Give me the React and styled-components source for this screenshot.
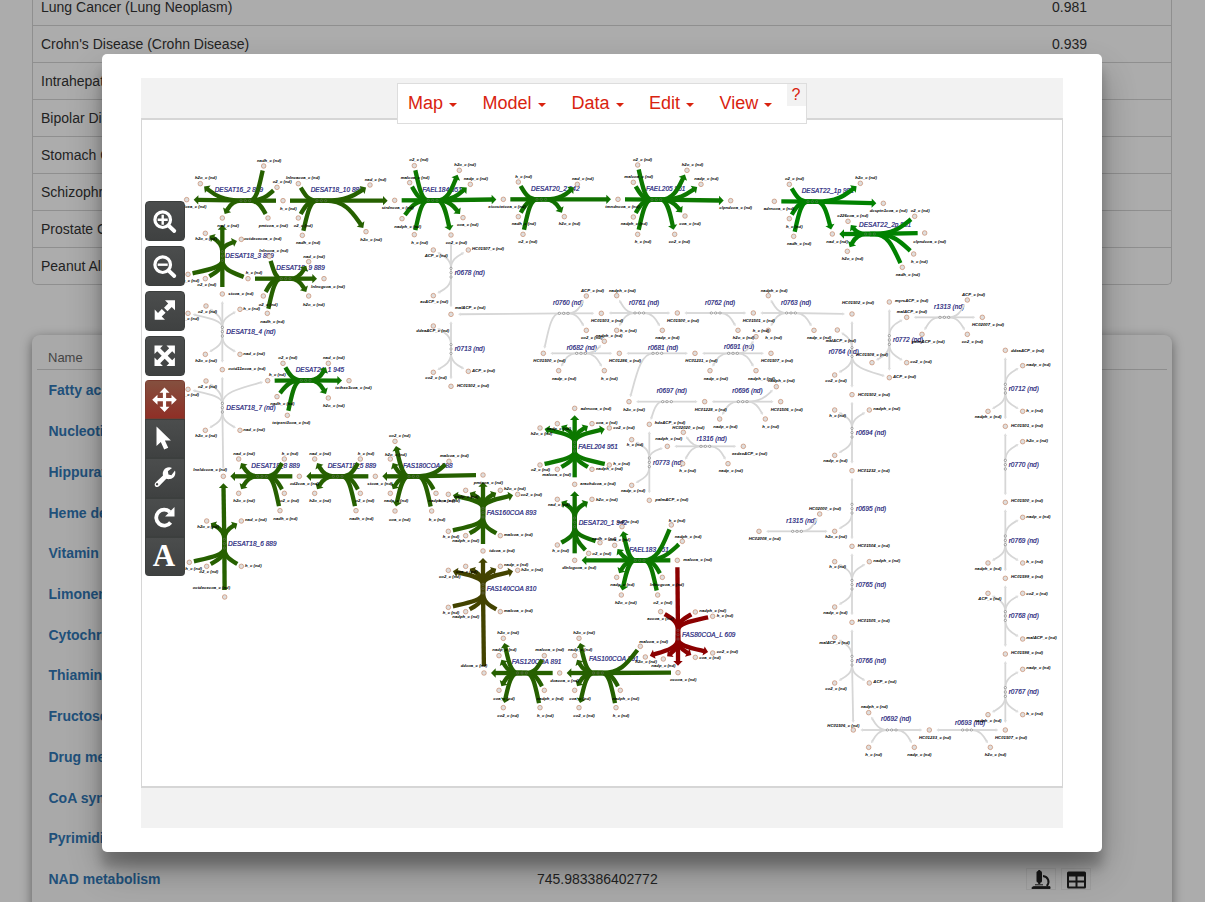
import React from 'react';
import styled, { createGlobalStyle, css } from 'styled-components';

const GlobalStyle = createGlobalStyle`
  html, body { margin: 0; padding: 0; overflow: hidden; }
  body { background: #fff; color: #333; font-family: "Liberation Sans", Arial, sans-serif; font-size: 14px; }
  * { box-sizing: border-box; }
`;

const Page = styled.main`
  height: 902px;
  overflow: hidden;
  padding: 0 33px 0 32px;
  background: #fefefe;
`;

const DiseaseTable = styled.section`
  margin-top: -11px;
  border: 1px solid #d3d3d3;
  border-top: 0;
  border-radius: 0 0 5px 5px;
`;

const DiseaseRow = styled.div`
  display: flex;
  align-items: center;
  height: 37px;
  padding-left: 8px;
  border-bottom: 1px solid #d3d3d3;
  &:last-child { border-bottom: 0; height: 36px; }
`;

const DiseaseName = styled.span`
  width: 1011px;
`;

const Card = styled.section`
  margin-top: 50px;
  height: 700px;
  padding: 0 5px;
  border-radius: 8px;
  background: #fafafa;
  box-shadow: 0 3px 12px rgba(0, 0, 0, 0.45);
`;

const CardHead = styled.div`
  height: 35px;
  padding: 14px 11px 0;
  border-bottom: 1px solid #d0d0d0;
  color: #666;
  font-size: 13px;
  line-height: 18px;
`;

const PathwayRow = styled.div`
  display: flex;
  align-items: center;
  height: 40.72px;
  padding-left: 11.5px;
`;

const PathwayLink = styled.a`
  width: 488.5px;
  color: #3077b5;
  font-weight: bold;
  white-space: nowrap;
`;

const PathwayValue = styled.span`
  width: 489px;
`;

const IconGroup = styled.div`
  display: flex;
  gap: 5px;
`;

const IconButton = styled.button`
  width: 30px;
  height: 22px;
  padding: 0;
  border: 1px solid #ebebeb;
  background: transparent;
  svg { display: block; }
`;

const Backdrop = styled.div`
  position: fixed;
  inset: 0;
  padding: 54px 0 0 102px;
  background: rgba(0, 0, 0, 0.32);
`;

const Modal = styled.div`
  width: 1000px;
  height: 798px;
  padding: 24px 39px;
  border-radius: 5px;
  background: #fff;
  box-shadow: 0 19px 38px rgba(0, 0, 0, 0.3), 0 15px 12px rgba(0, 0, 0, 0.22);
`;

const Viewer = styled.div`
  position: relative;
  display: flex;
  flex-direction: column;
  width: 922px;
  height: 750px;
  padding: 40px 0;
  background: #f2f2f2;
`;

const Canvas = styled.div`
  height: 670px;
  border: 1px solid #d6d6d6;
  border-top-width: 2px;
  border-bottom-width: 2px;
  background: #fff;
  svg { display: block; }
`;

const MenuBar = styled.nav`
  position: absolute;
  top: 5px;
  left: 256px;
  display: flex;
  width: 410px;
  height: 41px;
  padding-left: 10px;
  border: 1px solid #ddd;
  background: #fff;
  color: #d9230f;
`;

const MenuItem = styled.div`
  display: flex;
  align-items: center;
  width: ${(p) => p.$w}px;
  height: 38px;
  font-size: 18px;
  &::after {
    content: '';
    margin: 3px 0 0 6px;
    border: 4.5px solid transparent;
    border-top-color: #d9230f;
    border-bottom: 0;
  }
`;

const HelpButton = styled.div`
  position: absolute;
  top: 0;
  right: 0;
  width: 19px;
  height: 22px;
  padding-right: 1px;
  background: #f2f2f2;
  font-size: 16px;
  line-height: 21px;
  text-align: center;
`;

const Tools = styled.div`
  position: absolute;
  top: 123px;
  left: 4px;
  display: flex;
  flex-direction: column;
  gap: 5px;
`;

const ToolStack = styled.div`
  margin-top: -1px;
  overflow: hidden;
  border-radius: 4px;
`;

const Tool = styled.div`
  width: 40px;
  height: 40px;
  border-radius: 4px;
  background: linear-gradient(#4b4d4d, #3f4141);
  border: 1px solid #3c3f3e;
  svg { display: block; margin: -1px; }
  ${(p) =>
    p.$stacked &&
    css`
      height: 39.2px;
      border-radius: 0;
    `}
  ${(p) =>
    p.$active &&
    css`
      background: linear-gradient(#84503f, #8f2f26);
      border-color: #7a3a2e;
    `}
`;

/* ---- map data: three map units per pixel, each sheet with its own origin ---- */

const GREY = '#d6d6d6';
const C889 = '#266000';
const C951 = '#0c7800';
const C942 = '#107000';
const C981 = '#008200';
const C945 = '#0e7400';
const C810 = '#434300';
const C609 = '#8b0000';

const sheets = [
  [130, 140, [
    ['DESAT16_2 889', 254, 149, 346, 182, 'h', C889, 'h2o 211 131 195 113 >;hdcea 170 179 150 200 >;nad 277 234 262 257 >;nadh 401 78 381 62;o2 441 142 428 125;pmtcoa 414 234 386 257;h 459 182 450 206'],
    ['DESAT18_10 889', 542, 149, 574, 182, 'h', C889, '- 459 182;lnlncacoa 505 131 468 113;o2 505 234 491 257;nadh 517 286 498 307;nad 720 135 704 119 >;- 794 182 >;h2o 708 275 691 299 >'],
    ['DESAT18_3 889', 286, 347, 277, 348, 'v', C889, '- 277 234 >;h2o 226 280 196 295 >;octdececoa 334 298 342 294 >;h 174 403 158 420;o2 226 416 202 432;h 354 416 347 396;stcoa 277 462 295 459'],
    ['DESAT18_9 889', 439, 383, 467, 416, 'h', C889, '- 354 416;lnlncoa 418 349 388 332;o2 400 468 386 492;nadh 412 520 391 543;nad 536 365 520 348 >;lnlncgcoa 582 416 543 440 >;h2o 536 468 519 492 >'],
  ]],
  [130, 300, [
    ['DESAT18_4 (nd)', 289, 95, 277, 95, 'v', GREY, '- 277 -18;o2 228 18 204 35;h 174 40 157 56;h 330 28 340 24;h2o 226 163 196 180 >;nad 330 163 340 160 >;octd11ecoa 277 209 295 206 >'],
    ['DESAT18_7 (nd)', 289, 323, 277, 323, 'v', GREY, '- 277 209;o2 228 243 204 260;h 174 268 157 284;h 413 242 417 224;h2o 226 391 196 407 >;nad 330 391 340 388 >;lneldccoa 280 529 190 509 >'],
    ['DESAT24_1 945', 497, 209, 527, 241, 'h', C945, '- 413 242;o2 459 190 445 173;nadh 441 290 421 311;tetpent3coa 472 346 427 368;nad 595 190 579 173 >;tethex3coa 657 242 616 263 >;h2o 595 294 579 317 >'],
    ['DESAT18_8 889', 364, 496, 396, 529, 'h', C889, '- 280 529 >;nad 326 477 310 461 >;h2o 326 580 310 602 >;h 463 477 455 461;o2 463 580 450 602;nadh 450 632 430 656;od2coa 508 529 480 551'],
    ['DESAT18_5 889', 593, 496, 623, 529, 'h', C889, '- 508 529 >;nad 554 477 538 461 >;h2o 554 580 538 602 >;h 691 477 683 461;o2 691 580 676 602;nadh 678 632 658 656;stcoa 736 529 712 551'],
    ['DESAT18_6 889', 294, 731, 283, 731, 'v', C889, '- 280 529 >;h2o 230 663 202 680 >;nad 334 663 345 659 >;h 178 787 166 804;o2 230 799 208 815;h 334 799 345 797;octdececoa 284 891 188 863'],
  ]],
  [380, 380, [
    ['FAS180COA 888', 69, 257, 100, 289, 'h', C889, '- -14 289 >;co2 45 184 27 167 >;h2o 31 237 15 222 >;nadp 31 340 12 362 >;coa 45 393 27 417 >;malcoa 207 244 180 227;nadph 168 340 145 362;h 155 393 146 417;pmtcoa 309 285 281 308'],
    ['FAS160COA 893', 320, 398, 309, 398, 'v', C889, '- 309 285 >;nadp 257 331 223 349 >;coa 205 343 176 360 >;h2o 361 331 372 326 >;co2 413 343 422 342 >;h 205 454 188 469;nadph 257 467 217 482;malcoa 361 467 372 464;tdcoa 309 513 328 510'],
    ['FAEL183 951', 748, 509, 779, 541, 'h', C951, '- 584 541 >;co2 726 440 712 423 >;coa 704 496 687 479 >;nadp 710 592 691 614 >;h2o 724 645 705 668 >;h 874 435 866 420;nadph 907 484 884 468;lnlncgcoa 847 592 810 614;o2 833 645 820 668;malcoa 892 541 910 537'],
    ['DESAT20_1 942', 596, 428, 584, 427, 'v', C942, '- 584 313 >;nad 532 358 504 374 >;h2o 636 358 648 357 >;h 532 495 517 512;nadh 660 488 636 474;o2 626 520 637 519;dlnlcgcoa 584 541 547 563'],
    ['FAEL204 951', 595, 200, 584, 200, 'v', C951, 'adrncoa 584 85 602 84 >;nadp 532 131 500 145 >;h2o 480 144 452 161 >;coa 636 131 648 128 >;co2 688 144 700 141 >;o2 480 255 453 268;malcoa 532 268 487 284;nadph 636 268 648 264;h 688 255 700 251;arachdcoa 584 313 601 309'],
    ['r0773 (nd)', 819, 247, 808, 247, 'v', GREY, 'hdeACP 808 133 824 128;h 755 179 740 194;- 862 199;nadp 755 316 723 331;palmACP 808 361 826 357'],
    ['r1316 (nd)', 950, 176, 976, 199, 'h', GREY, 'nadph 862 199 826 176;HC02020 910 157 877 143;h 908 251 898 271;nadp 1044 251 1016 271;eedeeACP 1090 199 1056 220'],
  ]],
  [430, 540, [
    ['FAS140COA 810', 170, 146, 159, 146, 'v', C810, '- 159 33 >;coa 107 79 78 95 >;co2 55 91 27 108 >;nadp 211 79 222 74 >;h2o 263 91 274 89 >;h 55 202 38 218;nadph 107 215 67 230;malcoa 211 215 222 212;ddcoa 162 399 92 375'],
    ['FAS120COA 891', 245, 365, 276, 399, 'h', C889, '- 162 399 >;h2o 220 295 202 278 >;nadp 207 347 187 329 >;coa 207 451 190 474 >;co2 220 503 202 525 >;malcoa 343 347 316 329;nadph 343 451 320 474;h 330 503 321 525;dcacoa 389 399 361 422'],
    ['FAS100COA 891', 477, 356, 504, 399, 'h', C889, '- 389 399 >;h2o 447 295 430 278 >;nadp 434 347 414 329 >;coa 434 451 418 474 >;co2 447 503 430 525 >;malcoa 631 319 628 305;nadph 571 451 547 474;h 558 503 548 525;occoa 744 398 720 419'],
    ['FAS80COA_L 609', 756, 284, 744, 284, 'v', C609, '- 742 61;accoa 692 215 652 234;nadph 796 216 808 212;h 848 229 860 225;- 744 398 >;h2o 646 351 616 365 >;nadp 700 357 664 375 >;coa 796 352 808 351 >;co2 848 339 860 335 >'],
  ]],
  [380, 140, [
    ['FAEL184 951', 127, 149, 158, 181, 'h', C951, 'strdncoa 44 181 5 203;o2 103 77 88 59;malcoa 89 128 62 113;nadph 66 236 43 260;h 103 284 94 308;h2o 238 91 223 74 >;nadp 271 133 251 116 >;coa 249 233 231 254 >;co2 213 285 197 308 >;eicostetcoa 370 178 325 199 >'],
    ['DESAT20_2 942', 453, 146, 484, 178, 'h', C942, '- 370 178;h 415 126 406 109;nadh 415 230 395 251;o2 429 283 415 304;nad 592 133 576 116 >;h2o 553 230 536 251 >;tmndncoa 714 178 676 200 >'],
    ['r0678 (nd)', 224, 398, 213, 398, 'v', GREY, '- 213 285;ACP 160 330 134 347;HC01507 265 330 276 326;acACP 160 467 121 483;malACP 213 523 225 503'],
    ['r0713 (nd)', 224, 627, 213, 627, 'v', GREY, '- 213 523;ddeaACP 160 558 109 572;co2 160 697 136 711;ACP 265 694 276 690;HC01502 213 739 231 737'],
    ['r0760 (nd)', 519, 488, 551, 520, 'h', GREY, '- 213 523;- 490 640;ACP 619 468 603 451;HC01503 664 520 633 541;co2 619 571 603 593'],
  ]],
  [620, 140, [
    ['FAEL205 951', 78, 146, 109, 179, 'h', C951, '- -6 178;o2 53 75 39 59;malcoa 40 127 13 110;nadph 40 231 2 251;h 53 283 44 305;h2o 201 91 185 74 >;nadp 243 133 223 116 >;coa 195 228 178 251 >;co2 164 283 146 304 >;clpndcoa 332 182 298 203 >'],
    ['DESAT22_1p 981', 545, 152, 577, 185, 'h', C981, 'adrncoa 463 184 431 206;o2 508 133 495 116;h 508 236 498 260;nadh 521 289 501 311;h2o 721 130 706 113 >;dcsptn1coa 790 190 749 211 >;nad 637 282 619 305 >'],
    ['DESAT22_2p 981', 717, 254, 750, 282, 'h', C981, '- 637 282 >;c226coa 684 244 652 227 >;h2o 682 334 665 356 >;o2 884 229 872 212;clpndcoa 914 279 880 303;h 881 342 873 365;nadh 847 382 827 404'],
  ]],
  [510, 280, [
    ['r0761 (nd)', 357, 68, 388, 99, 'h', GREY, '- 275 99;nadph 320 47 297 31;h 320 151 330 151;HC01500 502 99 471 122;nadp 457 151 436 173'],
    ['r0762 (nd)', 585, 68, 617, 99, 'h', GREY, '- 502 99;h2o 684 151 668 173;HC01501 730 99 698 122'],
    ['r0763 (nd)', 813, 68, 843, 99, 'h', GREY, '- 730 99;nadph 775 47 752 31;h 775 151 766 173;nadp 912 151 891 173;HC01502 1026 102 996 68'],
    ['r0682 (nd)', 170, 203, 213, 220, 'h', GREY, 'HC01500 100 220 70 242;nadp 146 272 126 296;nadph 283 184 257 167;h 283 272 273 296;HC01286 328 220 297 242'],
    ['r0681 (nd)', 414, 203, 442, 220, 'h', GREY, '- 328 220;- 357 365;HC01231 555 220 526 242'],
    ['r0691 (nd)', 642, 200, 669, 220, 'h', GREY, '- 555 220;nadp 600 272 581 296;h 738 170 728 151;nadph 738 272 714 296;HC01507 783 220 753 242'],
    ['r0697 (nd)', 440, 332, 471, 365, 'h', GREY, 'h2o 357 365 340 389;- 418 433;HC01228 584 365 554 389'],
    ['r0696 (nd)', 667, 332, 698, 365, 'h', GREY, '- 584 365;nadp 629 417 610 439;nadph 799 320 774 302;h 766 417 757 439;HC01506 812 365 782 389'],
  ]],
  [740, 280, [
    ['r0764 (nd)', 266, 215, 336, 216, 'v', GREY, '- 336 102;malACP 292 150 257 180;co2 284 285 256 301;- 448 293;HC01502 336 344 354 342'],
    ['r0772 (nd)', 459, 179, 448, 180, 'v', GREY, 'myrsACP 448 66 465 62;- 500 112;HC01508 396 248 348 224;co2 500 248 511 245;ACP 448 293 459 290'],
    ['r1313 (nd)', 582, 80, 613, 112, 'h', GREY, 'malACP 500 112 470 95;palmACP 546 163 515 185;ACP 682 60 666 44;HC02007 727 112 696 134;co2 682 163 665 185'],
    ['r0694 (nd)', 348, 458, 336, 458, 'v', GREY, '- 336 344;h 284 390 268 406;nadph 388 390 400 386;nadp 284 526 250 542;HC01232 336 572 353 570'],
    ['r0695 (nd)', 348, 686, 336, 686, 'v', GREY, '- 336 572;- 284 754;- 336 799'],
    ['r0712 (nd)', 806, 326, 796, 326, 'v', GREY, 'ddeaACP 796 211 813 210;nadp 848 257 859 254;nadph 744 394 704 410;h 848 394 859 390;HC01501 796 439 813 437'],
    ['r0770 (nd)', 806, 554, 796, 554, 'v', GREY, '- 796 439;h2o 848 485 859 482;HC01500 796 667 813 662'],
  ]],
  [740, 500, [
    ['r1315 (nd)', 139, 62, 171, 94, 'h', GREY, 'HC02008 57 94 26 115;HC02000 239 42 207 26;h2o 284 94 256 110'],
    ['r0765 (nd)', 348, 254, 336, 254, 'v', GREY, 'HC01504 336 139 353 137;h 284 185 268 200;nadph 388 185 400 182;nadp 284 321 250 338;HC01505 336 367 353 362'],
    ['r0766 (nd)', 348, 482, 336, 482, 'v', GREY, '- 336 367;malACP 284 412 238 428;co2 284 549 256 566;ACP 388 549 400 545;HC01506 340 690 262 677'],
    ['r0692 (nd)', 423, 656, 455, 690, 'h', GREY, '- 340 690;nadph 386 638 363 620;h 386 742 376 764;nadp 523 742 502 764;HC01233 568 690 537 713'],
    ['r0693 (nd)', 645, 667, 681, 690, 'h', GREY, '- 568 690;h2o 751 742 734 764;HC01507 796 690 765 713'],
    ['r0769 (nd)', 806, 122, 796, 121, 'v', GREY, '- 796 7;nadp 848 52 859 49;nadph 744 189 704 206;h 848 189 859 185;HC01599 796 235 813 230'],
    ['r0768 (nd)', 806, 347, 796, 348, 'v', GREY, '- 796 235;ACP 744 280 715 295;co2 848 280 859 279;malACP 848 417 859 413;HC01598 796 462 813 458'],
    ['r0767 (nd)', 806, 576, 796, 576, 'v', GREY, '- 796 462;nadp 848 508 859 503;nadph 744 644 704 660;h 848 644 859 641;- 796 690'],
  ]],
];

const parse = (ox, oy, [label, lx, ly, cx, cy, dir, color, list]) => {
  const X = (v) => v + ox * 3;
  const Y = (v) => v + oy * 3;
  return {
    label, color, dir,
    lx: X(lx), ly: Y(ly), cx: X(cx), cy: Y(cy),
    mets: list.split(';').map((s) => {
      const [name, x, y, tx, ty] = s.split(' ');
      return { name, x: X(+x), y: Y(+y), tx: X(+tx), ty: Y(+ty), out: s.endsWith('>') };
    }),
  };
};

const reactions = sheets.flatMap(([ox, oy, rows]) => rows.map((r) => parse(ox, oy, r)));

const edgeOf = (r, m) => {
  const vert = r.dir === 'v';
  const sign = Math.sign(vert ? m.y - r.cy : m.x - r.cx);
  const sx = vert ? r.cx : r.cx + sign * 13;
  const sy = vert ? r.cy + sign * 13 : r.cy;
  const dx = m.x - sx;
  const dy = m.y - sy;
  const axial = vert ? dy : dx;
  const perp = vert ? dx : dy;
  const straight = Math.abs(perp / axial) < 0.12;
  const c1 = vert ? [sx, sy + dy * 0.5] : [sx + dx * 0.5, sy];
  const c2 = straight ? [sx, sy] : vert ? [sx + dx * 0.42, sy + dy * 0.68] : [sx + dx * 0.68, sy + dy * 0.42];
  const ang = Math.atan2(m.y - c2[1], m.x - c2[0]);
  const grey = r.color === GREY;
  const gap = straight ? 21 : 14;
  const head = grey ? 6 : m.out ? 12 : 0;
  const at = (d, o = 0) => [m.x - Math.cos(ang) * d - Math.sin(ang) * o, m.y - Math.sin(ang) * d + Math.cos(ang) * o];
  const end = at(gap + head);
  const path = straight
    ? `M${r.cx} ${r.cy}L${end.join(' ')}`
    : `M${r.cx} ${r.cy}L${sx} ${sy}C${c1.join(' ')} ${c2.join(' ')} ${end.join(' ')}`;
  const half = grey ? 5 : 14;
  const headPath = `M${at(gap).join(' ')}L${at(gap + head + 2, half).join(' ')}L${at(gap + head + 2, -half).join(' ')}Z`;
  return { path, headPath, hasHead: grey || m.out };
};

const ReactionName = styled.text`
  font: italic normal 30px "Liberation Sans", Arial, sans-serif;
  letter-spacing: 0.3px;
  fill: #202078;
  stroke: #202078;
  stroke-width: 0.9px;
`;

const MetaboliteName = styled.text`
  font: italic bold 20px "Liberation Sans", Arial, sans-serif;
  fill: #000;
`;

const Reaction = ({ r }) => {
  const grey = r.color === GREY;
  return (
    <g>
      <ReactionName transform={`translate(${r.lx} ${r.ly + 7}) scale(0.643)`}>{r.label}</ReactionName>
      {r.mets.map((m, i) => {
        const e = edgeOf(r, m);
        return (
          <g key={i}>
            <path d={e.path} fill="none" stroke={r.color} strokeWidth={grey ? 5.4 : 13} />
            {e.hasHead && <path d={e.headPath} fill={grey ? '#dedede' : r.color} />}
          </g>
        );
      })}
      {[-13, 0, 13].map((d) => (
        <circle
          key={d}
          cx={r.cx + (r.dir === 'h' ? d : 0)}
          cy={r.cy + (r.dir === 'v' ? d : 0)}
          r="3.4"
          fill={grey ? '#fff' : 'none'}
          stroke={grey ? '#444' : '#777'}
          strokeWidth="1.3"
        />
      ))}
    </g>
  );
};

const MetabolicMap = () => {
  const mets = reactions.flatMap((r) => r.mets).filter((m) => m.name !== '-');
  return (
    <svg width="920" height="666" viewBox="426 360 2760 1998">
      {reactions.map((r, i) => <Reaction key={i} r={r} />)}
      {mets.map((m, i) => (
        <circle key={i} cx={m.x} cy={m.y} r="6.9" fill="#dedede" stroke="#c27a55" strokeWidth="1.8" />
      ))}
      {mets.map((m, i) => (
        <MetaboliteName key={i} transform={`translate(${m.tx} ${m.ty + 4.5}) scale(0.643)`}>
          {`${m.name}_c (nd)`}
        </MetaboliteName>
      ))}
    </svg>
  );
};

/* ---- toolbar drawings, on a 40px square ---- */

const Glyph = ({ children }) => (
  <svg width="40" height="40" viewBox="0 0 40 40" fill="#fff" stroke="none">{children}</svg>
);

const Lens = ({ plus }) => (
  <Glyph>
    <circle cx="17.7" cy="18.7" r="7.8" fill="none" stroke="#fff" strokeWidth="3.2" />
    <path d="M23.5 24.5L29.3 30" stroke="#fff" strokeWidth="3.8" strokeLinecap="round" />
    <path d={plus ? 'M12.7 18.7h10M17.7 13.7v10' : 'M12.7 18.7h10'} stroke="#fff" strokeWidth="2.4" />
  </Glyph>
);

const Resize = () => (
  <Glyph>
    <path d="M20 9.3H30V19.3L26.7 16L22.5 20.2L19 16.7L23.2 12.5Z" />
    <path d="M20 28.8H9.7V18.6L13 21.9L16.8 18.1L20.6 21.8L16.7 25.5Z" />
  </Glyph>
);

const Expand = () => (
  <Glyph>
    <path d="M9.5 9.5h8.4l-2.7 2.7 4.5 4.5 4.5-4.5-2.7-2.7h8.4v8.4l-2.7-2.7-4.5 4.5 4.5 4.5 2.7-2.7v8.4h-8.4l2.7-2.7-4.5-4.5-4.5 4.5 2.7 2.7H9.5v-8.4l2.7 2.7 4.5-4.5-4.5-4.5-2.7 2.7z" />
  </Glyph>
);

const Move = () => (
  <Glyph>
    <path d="M19.5 7.5l5 5.3h-3.4v5.300h5.400v-3.400l5.300 5-5.300 5v-3.400h-5.400v5.400h3.400l-5 5.300-5-5.300h3.400v-5.400h-5.400v3.400l-5.300-5 5.300-5v3.400h5.400v-5.300h-3.400z" />
  </Glyph>
);

const Pointer = () => (
  <Glyph>
    <path d="M11.5 7.5V27l4.3-4 3.4 7.6 4-1.8-3.3-7.3h6z" />
  </Glyph>
);

const Wrench = () => (
  <Glyph>
    <path
      fillRule="evenodd"
      d="M30 12.5c1.2 4.4-1 8-5 8.6-1.6.2-2.8 0-3.7-.4l-7 7.3c-2.8 2.7-6.3-.7-3.7-3.6l7.400-6.900c-1-4 1.600-8.200 6-8.300 1.200 0 2.200.2 3 .7l-4.100 3.300.5 3.200 3 .9zM12 25a1.200 1.200 0 1 0 .1 0z"
    />
  </Glyph>
);

const Redo = () => (
  <Glyph>
    <path d="M25.6 24.5a8 8 0 1 1-.7-10.5" fill="none" stroke="#fff" strokeWidth="3.8" />
    <path d="M29.5 9v9.4h-9.4z" />
  </Glyph>
);

const Letter = styled.div`
  color: #fff;
  font: bold 31px/36px "Liberation Serif", "Times New Roman", serif;
  text-align: center;
  padding-right: 2px;
`;

const Microscope = () => (
  <svg width="28" height="20" viewBox="0 0 28 20" fill="#222">
    <rect x="9.5" y="2" width="5.5" height="11.500" rx="1.5" />
    <rect x="11" y="1" width="2.5" height="14" rx="1" />
    <path d="M16 7c5 .5 7.3 6 3.8 10" fill="none" stroke="#222" strokeWidth="2" />
    <path d="M8 15.8h8M5 19q0-1.300 2-1.300h16v2H5z" stroke="#222" strokeWidth="1" />
  </svg>
);

const Grid = () => (
  <svg width="28" height="20" viewBox="0 0 28 20">
    <path
      fill="#222"
      fillRule="evenodd"
      d="M6.500 2.500h16q1.500 0 1.500 1.500v14q0 1.500-1.500 1.500h-16Q5 19.500 5 18V4q0-1.500 1.500-1.500zM7 7.500v4h6.500v-4zM15.500 7.500v4H22v-4zM7 13.500v4h6.500v-4zM15.500 13.500v4H22v-4z"
    />
  </svg>
);

const diseases = [
  ['Lung Cancer (Lung Neoplasm)', '0.981'],
  ["Crohn's Disease (Crohn Disease)", '0.939'],
  ['Intrahepatic Cholestasis', ''],
  ['Bipolar Disorder', ''],
  ['Stomach Cancer', ''],
  ['Schizophrenia', ''],
  ['Prostate Cancer', ''],
  ['Peanut Allergy', ''],
];

const pathways = [
  'Fatty acid synthesis', 'Nucleotides', 'Hippurate metabolism', 'Heme degradation',
  'Vitamin metabolism', 'Limonene degradation', 'Cytochrome metabolism', 'Thiamine metabolism',
  'Fructose metabolism', 'Drug metabolism', 'CoA synthesis', 'Pyrimidine synthesis', 'NAD metabolism',
];

export default function App() {
  return (
    <>
      <GlobalStyle />
      <Page>
        <DiseaseTable>
          {diseases.map(([name, score]) => (
            <DiseaseRow key={name}>
              <DiseaseName>{name}</DiseaseName>
              <span>{score}</span>
            </DiseaseRow>
          ))}
        </DiseaseTable>
        <Card>
          <CardHead>Name</CardHead>
          {pathways.map((name, i) => (
            <PathwayRow key={name}>
              <PathwayLink>{name}</PathwayLink>
              {i === pathways.length - 1 && (
                <>
                  <PathwayValue>745.983386402772</PathwayValue>
                  <IconGroup>
                    <IconButton><Microscope /></IconButton>
                    <IconButton><Grid /></IconButton>
                  </IconGroup>
                </>
              )}
            </PathwayRow>
          ))}
        </Card>
      </Page>
      <Backdrop>
        <Modal>
          <Viewer>
            <Canvas><MetabolicMap /></Canvas>
            <MenuBar>
              <MenuItem $w={74.5}>Map</MenuItem>
              <MenuItem $w={89}>Model</MenuItem>
              <MenuItem $w={77.5}>Data</MenuItem>
              <MenuItem $w={70.5}>Edit</MenuItem>
              <MenuItem $w={60}>View</MenuItem>
              <HelpButton>?</HelpButton>
            </MenuBar>
            <Tools>
              <Tool><Lens plus /></Tool>
              <Tool><Lens /></Tool>
              <Tool><Resize /></Tool>
              <Tool><Expand /></Tool>
              <ToolStack>
                <Tool $stacked $active><Move /></Tool>
                <Tool $stacked><Pointer /></Tool>
                <Tool $stacked><Wrench /></Tool>
                <Tool $stacked><Redo /></Tool>
                <Tool $stacked><Letter>A</Letter></Tool>
              </ToolStack>
            </Tools>
          </Viewer>
        </Modal>
      </Backdrop>
    </>
  );
}
